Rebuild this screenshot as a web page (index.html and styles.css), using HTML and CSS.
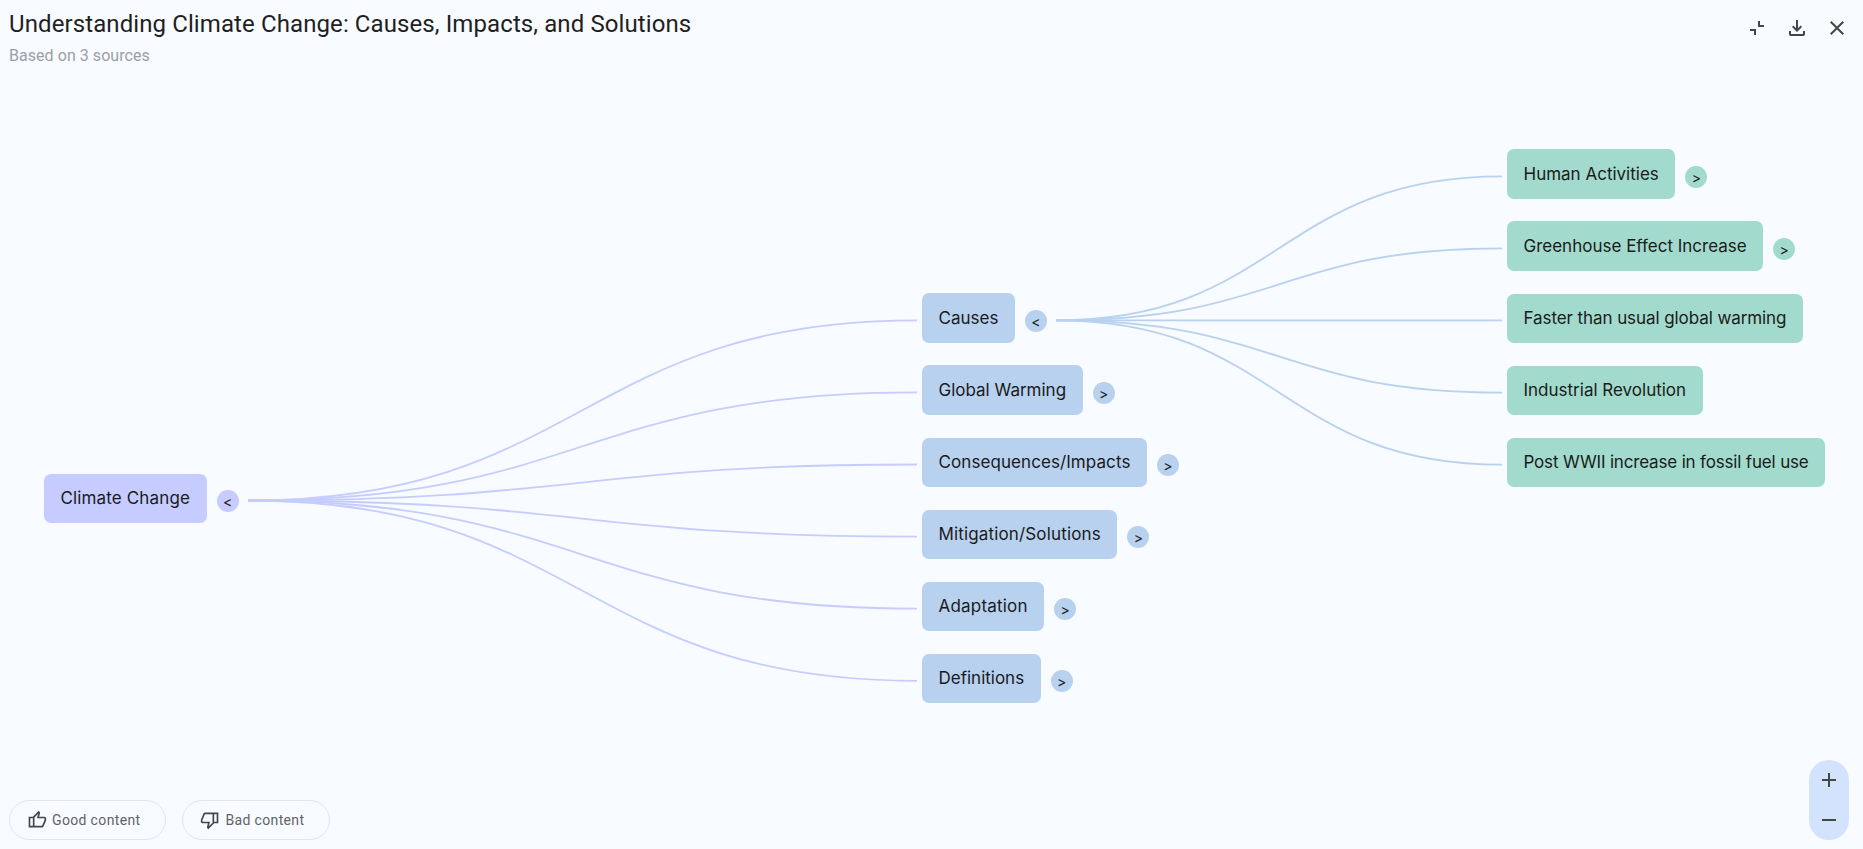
FILE: index.html
```html
<!DOCTYPE html>
<html lang="en">
<head>
<meta charset="utf-8">
<title>Understanding Climate Change</title>
<link rel="stylesheet" href="styles.css">
</head>
<body>
<div class="app">
  <header class="topbar">
    <div class="heading">
      <h1 class="title">Understanding Climate Change: Causes, Impacts, and Solutions</h1>
      <p class="subtitle">Based on 3 sources</p>
    </div>
    <div class="actions">
      <button class="icon-btn"><svg class="icon" viewBox="0 -960 960 960"><path d="M440-440v240h-80v-160H200v-80h240Zm160-320v160h160v80H520v-240h80Z"/></svg></button>
      <button class="icon-btn"><svg class="icon" viewBox="0 -960 960 960"><path d="M480-320 280-520l56-58 104 104v-326h80v326l104-104 56 58-200 200ZM240-160q-33 0-56.5-23.5T160-240v-120h80v120h480v-120h80v120q0 33-23.5 56.5T720-160H240Z"/></svg></button>
      <button class="icon-btn"><svg class="icon" viewBox="0 -960 960 960"><path d="m256-200-56-56 224-224-224-224 56-56 224 224 224-224 56 56-224 224 224 224-56 56-224-224-224 224Z"/></svg></button>
    </div>
  </header>

  <main class="map">
    <svg class="edges" width="1863" height="849" viewBox="0 0 1863 849" fill="none">
      <g class="edges-root">
        <path d="M248 500.5C582 500.5 582 320.3 917 320.3"/>
        <path d="M248 500.5C582 500.5 582 392.4 917 392.4"/>
        <path d="M248 500.5C582 500.5 582 464.5 917 464.5"/>
        <path d="M248 500.5C582 500.5 582 536.6 917 536.6"/>
        <path d="M248 500.5C582 500.5 582 608.7 917 608.7"/>
        <path d="M248 500.5C582 500.5 582 680.8 917 680.8"/>
      </g>
      <g class="edges-mid">
        <path d="M1056 320.3C1279 320.3 1279 176.3 1502 176.3"/>
        <path d="M1056 320.3C1279 320.3 1279 248.4 1502 248.4"/>
        <path d="M1056 320.3H1502"/>
        <path d="M1056 320.3C1279 320.3 1279 392.6 1502 392.6"/>
        <path d="M1056 320.3C1279 320.3 1279 464.7 1502 464.7"/>
      </g>
    </svg>

    <div class="item root pos-root"><div class="node fit-root">Climate Change</div><span class="toggle">&lt;</span></div>

    <div class="item mid m1"><div class="node">Causes</div><span class="toggle">&lt;</span></div>
    <div class="item mid m2"><div class="node">Global Warming</div><span class="toggle">&gt;</span></div>
    <div class="item mid m3"><div class="node fit-m3">Consequences/Impacts</div><span class="toggle">&gt;</span></div>
    <div class="item mid m4"><div class="node fit-m4">Mitigation/Solutions</div><span class="toggle">&gt;</span></div>
    <div class="item mid m5"><div class="node fit-m5">Adaptation</div><span class="toggle">&gt;</span></div>
    <div class="item mid m6"><div class="node">Definitions</div><span class="toggle">&gt;</span></div>

    <div class="item leaf l1"><div class="node">Human Activities</div><span class="toggle">&gt;</span></div>
    <div class="item leaf l2"><div class="node">Greenhouse Effect Increase</div><span class="toggle">&gt;</span></div>
    <div class="item leaf l3"><div class="node fit-l3">Faster than usual global warming</div></div>
    <div class="item leaf l4"><div class="node">Industrial Revolution</div></div>
    <div class="item leaf l5"><div class="node fit-l5">Post WWII increase in fossil fuel use</div></div>

    <div class="zoom">
      <button class="icon-btn zoom-btn"><svg class="icon" viewBox="0 -960 960 960"><path d="M440-440H200v-80h240v-240h80v240h240v80H520v240h-80v-240Z"/></svg></button>
      <button class="icon-btn zoom-btn"><svg class="icon" viewBox="0 -960 960 960"><path d="M200-440v-80h560v80H200Z"/></svg></button>
    </div>
  </main>

  <footer class="feedback">
    <button class="pill"><svg class="thumb" viewBox="0 -960 960 960"><path d="M720-120H280v-520l280-280 50 50q7 7 11.5 19t4.5 23v14l-44 174h258q32 0 56 24t24 56v80q0 7-2 15t-4 15L794-168q-9 20-30 34t-44 14Zm-360-80h360l120-280v-80H480l54-220-174 174v406Zm0-406v406-406Zm-80-34v80H160v360h120v80H80v-520h200Z"/></svg>Good content</button>
    <button class="pill"><svg class="thumb" viewBox="0 -960 960 960"><path d="M240-840h440v520L400-40l-50-50q-7-7-11.5-19t-4.5-23v-14l44-174H120q-32 0-56-24t-24-56v-80q0-7 2-15t4-15l120-282q9-20 30-34t44-14Zm360 80H240L120-480v80h360l-54 220 174-174v-406Zm0 406v-406 406Zm80 34v-80h120v-360H680v-80h200v520H680Z"/></svg>Bad content</button>
  </footer>
</div>
</body>
</html>
```

FILE: styles.css
```css
* { box-sizing: border-box; }
html, body { margin: 0; height: 100%; overflow: hidden; }
body { background: #f8fbff; color: #1f1f1f; font-family: "Roboto", "Liberation Sans", sans-serif; }
button { font: inherit; background: none; border: 0; padding: 0; }

.app { position: relative; width: 1863px; height: 849px; display: flex; flex-direction: column; justify-content: space-between; }

.topbar { position: relative; z-index: 2; display: flex; justify-content: space-between; align-items: flex-start; padding: 8px 14px 0 9px; }
.title { margin: 0; font-size: 24px; line-height: 32px; font-weight: 400; letter-spacing: 0.1px; color: #1f1f1f; }
.subtitle { margin: 5.5px 0 0; font-size: 16px; line-height: 20px; letter-spacing: 0.05px; color: #9aa0a6; }
.actions { display: flex; gap: 16px; padding-top: 8px; }
.icon-btn { display: flex; align-items: center; justify-content: center; width: 24px; height: 24px; }
.icon { width: 24px; height: 24px; fill: #444746; display: block; }

.map { position: absolute; inset: 0; }
.edges { position: absolute; left: 0; top: 0; stroke-width: 1.8; }
.edges-root { stroke: #c6ccff; }
.edges-mid { stroke: #b8d1ef; }

.item { position: absolute; display: flex; gap: 10px; }
.node { height: 49.5px; padding: 13.5px 16.5px 0; border-radius: 7px; font-family: "Inter", "Noto Sans", sans-serif; font-size: 17px; line-height: 22px; color: #1a1a1a; white-space: nowrap; }
.toggle { width: 22px; height: 22px; margin-top: 16.7px; border-radius: 50%; font-family: "Inter", sans-serif; font-size: 14px; line-height: 23px; text-align: center; color: #1f1f1f; }

.fit-root { letter-spacing: 0.14px; }
.fit-m3 { letter-spacing: 0.08px; }
.fit-m4 { letter-spacing: 0.15px; }
.fit-m5 { letter-spacing: 0.2px; }
.fit-l3 { letter-spacing: -0.08px; }
.fit-l5 { letter-spacing: -0.17px; }

.root .node, .root .toggle { background: #c6ccff; }
.mid .node, .mid .toggle { background: #b8d1ef; }
.leaf .node, .leaf .toggle { background: #a2dbcd; }

.pos-root { left: 44px; top: 473.5px; }
.mid { left: 922px; }
.m1 { top: 293.3px; } .m2 { top: 365.4px; } .m3 { top: 437.5px; }
.m4 { top: 509.6px; } .m5 { top: 581.7px; } .m6 { top: 653.8px; }
.leaf { left: 1507px; }
.l1 { top: 149.3px; } .l2 { top: 221.4px; } .l3 { top: 293.5px; } .l4 { top: 365.6px; } .l5 { top: 437.7px; }

.zoom { position: absolute; left: 1809px; top: 760px; width: 40px; height: 80px; border-radius: 20px; background: #d3e3fd; display: flex; flex-direction: column; }
.zoom-btn { width: 40px; height: 40px; }

.feedback { position: relative; z-index: 2; display: flex; gap: 16px; padding: 0 0 9.5px 9px; }
.pill { display: flex; align-items: center; gap: 5px; height: 40px; padding: 0 25px 0 17px; border: 1px solid #e1e6ef; border-radius: 20px; font-size: 14px; letter-spacing: 0.35px; color: #5f6368; }
.thumb { width: 20px; height: 20px; fill: #444746; flex: none; }
```
